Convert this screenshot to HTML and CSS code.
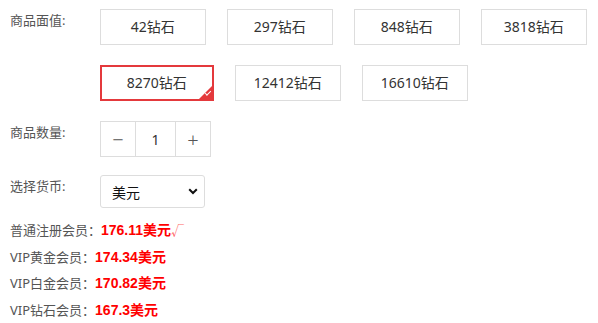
FILE: index.html
```html
<!DOCTYPE html>
<html lang="zh-CN">
  <head>
    <meta charset="UTF-8" />
    <title>商品购买</title>
    <link rel="stylesheet" href="styles.css">
  </head>
  <body>
    <div class="buy-panel">
      <div class="form-row row-face">
        <div class="row-label">商品面值:</div>
        <div class="face-list">
          <div class="face-item">42钻石</div>
          <div class="face-item">297钻石</div>
          <div class="face-item">848钻石</div>
          <div class="face-item">3818钻石</div>
          <div class="face-item selected">8270钻石<span class="tick"></span></div>
          <div class="face-item">12412钻石</div>
          <div class="face-item">16610钻石</div>
        </div>
      </div>
      <div class="form-row row-qty">
        <div class="row-label">商品数量:</div>
        <div class="qty-box">
          <span class="qty-btn">&minus;</span>
          <span class="qty-num">1</span>
          <span class="qty-btn">+</span>
        </div>
      </div>
      <div class="form-row row-cur">
        <div class="row-label">选择货币:</div>
        <div class="cur-select">
          <span>美元</span>
          <svg width="10" height="7" viewBox="0 0 10 7"><path d="M1.2 1.2 L5 5 L8.8 1.2" fill="none" stroke="#111" stroke-width="2"/></svg>
        </div>
      </div>
      <div class="price-list">
        <div class="price-line">普通注册会员：<b>176.11美元</b><span class="ok">√</span></div>
        <div class="price-line">VIP黄金会员：<b>174.34美元</b></div>
        <div class="price-line">VIP白金会员：<b>170.82美元</b></div>
        <div class="price-line">VIP钻石会员：<b>167.3美元</b></div>
      </div>
    </div>
  </body>
</html>
```

FILE: styles.css
```css
body {
  margin: 0;
  font-family: "Noto Sans", "Noto Sans CJK SC", sans-serif;
  font-size: 13px;
  background-color: #fff;
}
.buy-panel {
  padding: 9px 0 0 10px;
}
.form-row {
  display: flex;
  align-items: flex-start;
}
.row-label {
  width: 90px;
  color: #555;
  line-height: 22px;
}
.row-face {
  margin-bottom: 20px;
}
.face-list {
  display: flex;
  flex-wrap: wrap;
  width: 500px;
  column-gap: 21px;
  row-gap: 20px;
}
.face-item {
  position: relative;
  box-sizing: border-box;
  width: 106px;
  height: 36px;
  border: 1px solid #ddd;
  color: #333;
  font-size: 14px;
  line-height: 34px;
  text-align: center;
}
.face-item.selected {
  width: 114px;
  border: 2px solid #e4393c;
  line-height: 32px;
}
.tick {
  position: absolute;
  right: 0;
  bottom: 0;
  width: 0;
  height: 0;
  border-left: 13px solid transparent;
  border-bottom: 13px solid #e4393c;
}
.tick::after {
  content: "";
  position: absolute;
  left: -7px;
  top: 5px;
  width: 5px;
  height: 2px;
  border-left: 1.5px solid #fff;
  border-bottom: 1.5px solid #fff;
  transform: rotate(-45deg);
}
.row-qty {
  margin-bottom: 18px;
}
.qty-box {
  display: flex;
  border: 1px solid #ddd;
  height: 34px;
}
.qty-btn,
.qty-num {
  display: flex;
  align-items: center;
  justify-content: center;
  color: #555;
}
.qty-btn {
  width: 34px;
  font-size: 20px;
  font-weight: 300;
}
.qty-num {
  width: 39px;
  border-left: 1px solid #ddd;
  border-right: 1px solid #ddd;
  color: #333;
  font-size: 14px;
}
.cur-select {
  display: flex;
  align-items: center;
  justify-content: space-between;
  box-sizing: border-box;
  width: 105px;
  height: 33px;
  padding: 0 6px 0 11px;
  border: 1px solid #ddd;
  border-radius: 3px;
  color: #111;
  font-size: 14px;
}
.price-list {
  margin-top: 9px;
}
.price-line {
  color: #555;
  line-height: 26.7px;
}
.price-line b {
  color: #f00;
  font-family: "Liberation Sans", "Noto Sans CJK SC", sans-serif;
  font-size: 14px;
}
.price-line .ok {
  color: #f66;
}
```
